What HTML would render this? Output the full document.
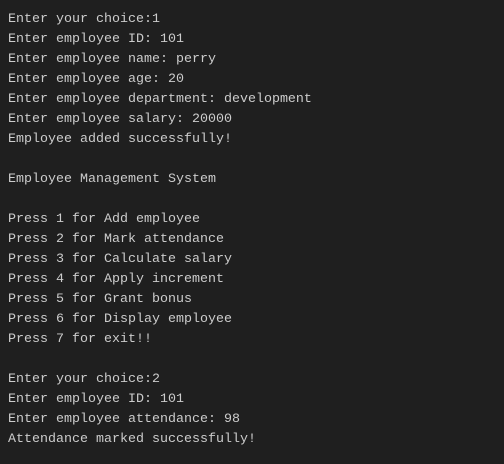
<!DOCTYPE html>
<html><head><style>
html,body{margin:0;padding:0;background:#1f1f1f;width:504px;height:464px;overflow:hidden}
pre{margin:0;padding:10px 0 0 8px;font-family:"Liberation Mono",monospace;font-size:13.33px;line-height:20px;color:#cccccc}
</style></head><body><pre>Enter your choice:1
Enter employee ID: 101
Enter employee name: perry
Enter employee age: 20
Enter employee department: development
Enter employee salary: 20000
Employee added successfully!

Employee Management System

Press 1 for Add employee
Press 2 for Mark attendance
Press 3 for Calculate salary
Press 4 for Apply increment
Press 5 for Grant bonus
Press 6 for Display employee
Press 7 for exit!!

Enter your choice:2
Enter employee ID: 101
Enter employee attendance: 98
Attendance marked successfully!</pre></body></html>
